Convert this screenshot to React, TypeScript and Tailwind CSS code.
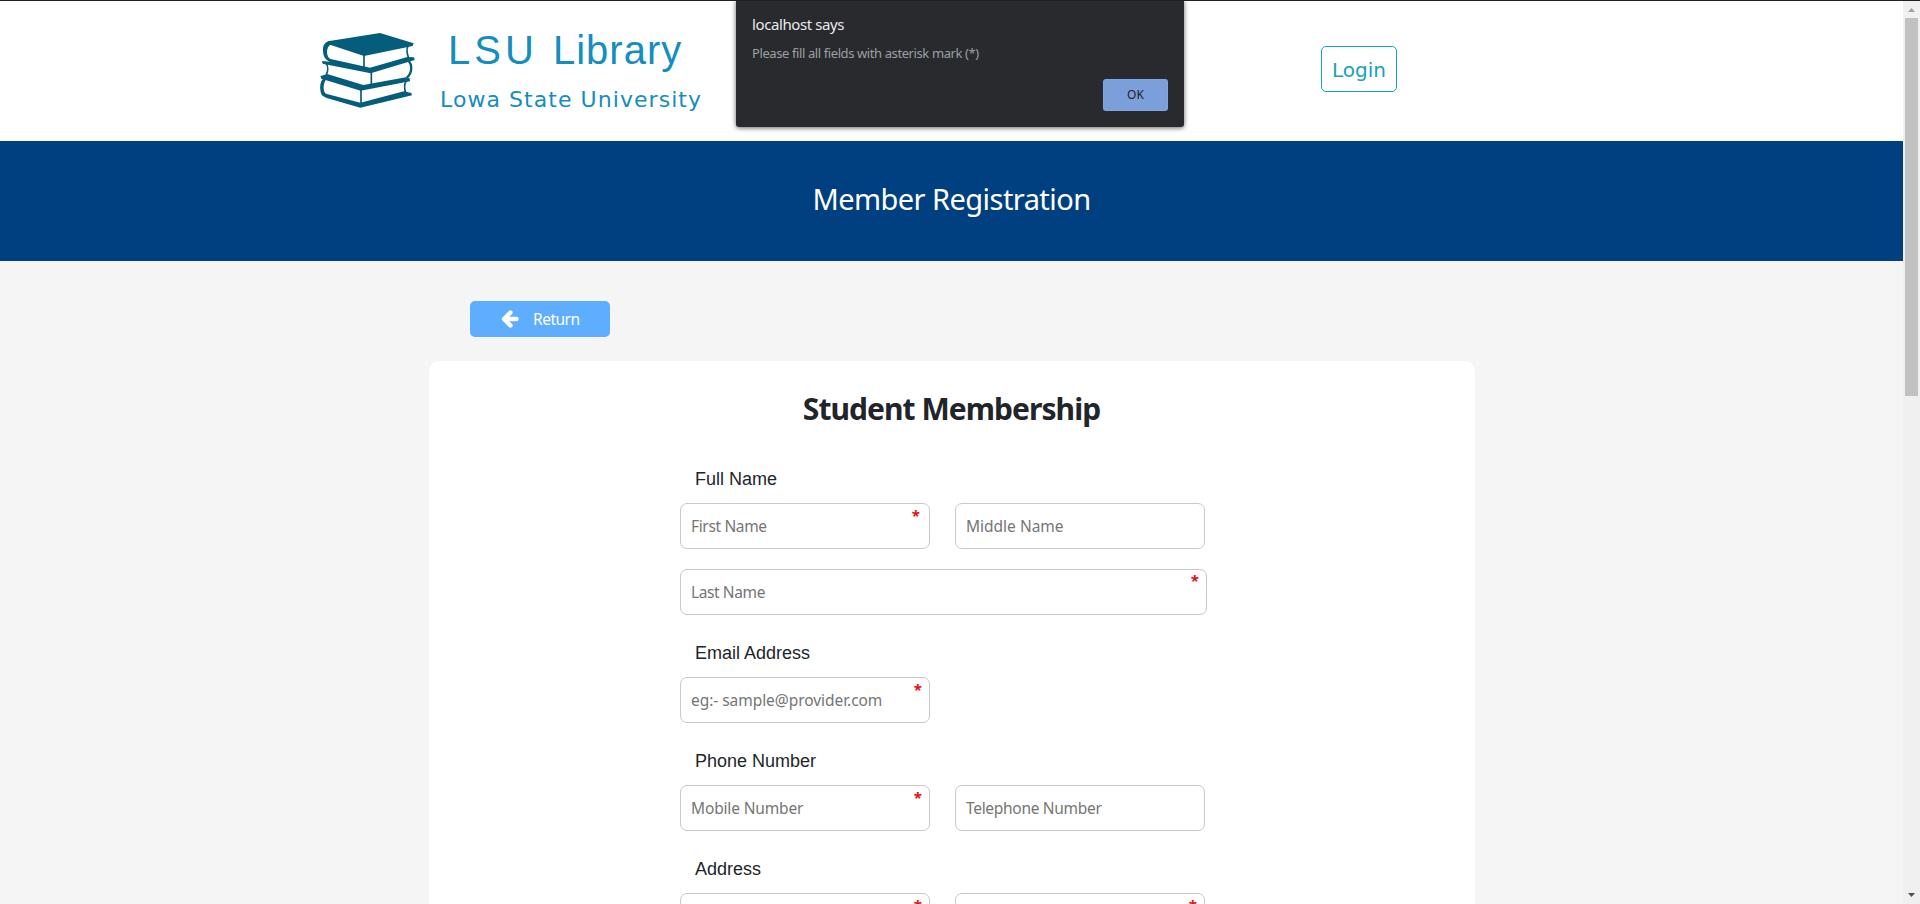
import React from "react";

type FieldProps = {
  placeholder: string;
  wide?: boolean;
  mark?: string;
  track?: string;
};

function Field({ placeholder, wide, mark, track = "" }: FieldProps) {
  return (
    <div className={`relative h-[46px] ${wide ? "w-[527px]" : "w-[250px]"}`}>
      <input
        type="text"
        placeholder={placeholder}
        className={`h-full w-full rounded-[7px] border border-[#c8c8c8] bg-white px-[10px] text-[15.5px] text-[#212529] placeholder:text-[#757575] ${track}`}
      />
      {mark && (
        <span className={`absolute text-[15px] leading-[22px] font-bold text-[#e80c14] ${mark}`}>*</span>
      )}
    </div>
  );
}

function Label({ children }: { children: React.ReactNode }) {
  return (
    <label className="mb-[10px] block pl-[15px] font-['Liberation_Sans',sans-serif] text-[18px] leading-[27px] text-[#212529]">
      {children}
    </label>
  );
}

function Books() {
  return (
    <svg viewBox="60 90 300 240" className="mt-[29px] h-[80px] w-[100px] shrink-0">
      <g fill="#045d7b">
        <path d="M84 124 L240 99 L341 130 L338 138 L320 142 L192 168 L90 134 Z" />
        <path d="M92 122 C72 124 68 140 69 153 C70 170 76 180 90 185 L66 183 L68 191 L212 220 L344 180 L342 172 L322 171 L210 203 L92 177 C77 170 78 140 92 134 Z" />
        <path d="M80 222 L61 229 L64 236 L182 272 L330 244 L329 235 L318 232 L190 255 L84 223 Z" />
        <path d="M72 234 C60 242 58 262 63 280 C64 287 72 291 80 294 L181 323 L336 286 L334 279 L312 274 L181 308 L78 281 C68 274 69 250 78 239 Z" />
      </g>
      <g fill="none" stroke="#045d7b" strokeWidth="5">
        <path d="M192 163 V202 M214 216 V257 M183 268 V312" />
        <path d="M324 138 C318 150 321 162 326 174" />
        <path d="M324 182 C337 192 338 220 320 233" strokeWidth="7" />
        <path d="M76 188 C86 198 84 214 79 224" />
        <path d="M318 244 C311 256 313 266 317 279" />
      </g>
    </svg>
  );
}

function Dialog() {
  return (
    <div className="absolute -top-px left-[736px] flex h-[127px] w-[448px] flex-col rounded-b-[3px] bg-[#292a2d] px-4 pt-[14px] shadow-[0_1px_5px_rgba(0,0,0,0.6)]">
      <p className="text-[15px] leading-[21px] tracking-[-0.4px] whitespace-nowrap text-[#e8eaed]">localhost says</p>
      <p className="mt-[8px] text-[13px] leading-[20px] tracking-[-0.4px] whitespace-nowrap text-[#9aa0a6]">
        Please fill all fields with asterisk mark (*)
      </p>
      <button className="mt-[16px] h-[32px] w-[65px] self-end rounded-[3px] border border-[#8ab0ee]/40 bg-[#7b9fdb] text-[12px] text-[#202124]">
        OK
      </button>
    </div>
  );
}

function Scrollbar() {
  return (
    <div className="flex h-full w-[17px] shrink-0 flex-col items-center bg-[#f0f0f0]">
      <svg viewBox="0 0 17 17" className="h-[17px] w-[17px]">
        <path d="M5 11 L8.5 7 L12 11 Z" fill="#a0a0a0" />
      </svg>
      <div className="h-[378px] w-[13px] bg-[#c1c1c1]" />
      <svg viewBox="0 0 17 17" className="mt-auto h-[17px] w-[17px]">
        <path d="M5 6 L12 6 L8.5 10 Z" fill="#505050" />
      </svg>
    </div>
  );
}

export default function App() {
  return (
    <div className="relative flex h-[904px] w-[1920px] overflow-hidden border-t border-[#202124] bg-[#f5f5f5] font-['Noto_Sans',sans-serif]">
      <div className="flex min-w-0 flex-1 flex-col overflow-hidden">
        <header className="flex h-[140px] shrink-0 items-start bg-white pl-[320px]">
          <Books />
          <div className="ml-[20px] w-[300px] text-[#148dbf]">
            <h1 className="mt-[26px] pl-[8px] font-['Liberation_Sans',sans-serif] text-[40px] leading-[46px] whitespace-nowrap">
              <span className="tracking-[4px]">LSU </span>
              <span className="tracking-[1px]">Library</span>
            </h1>
            <p className="mt-[12px] font-['DejaVu_Sans',sans-serif] text-[22px] leading-[30px] tracking-[1.05px] whitespace-nowrap">
              Lowa State University
            </p>
          </div>
          <button className="mt-[45px] ml-[581px] h-[46px] w-[76px] rounded-[5px] border border-[#17a2b8] pt-[2px] font-['DejaVu_Sans',sans-serif] text-[20px] text-[#17a2b8]">
            Login
          </button>
        </header>
        <div className="flex h-[120px] shrink-0 justify-center bg-[#004080] pt-[35px]">
          <h2 className="text-[29px] leading-[45px] tracking-[-0.55px] whitespace-nowrap text-white">Member Registration</h2>
        </div>
        <main className="flex shrink-0 flex-col pt-[40px] pl-[429px]">
          <button className="ml-[41px] flex h-[36px] w-[140px] items-center rounded-[5px] bg-[#5eadff] pl-[31px] text-[15.5px] text-white">
            <svg viewBox="0 0 18 18" className="h-[18px] w-[18px]">
              <path d="M9.5 2.5 L3 9 L9.5 15.5 M4 9 H15.5" fill="none" stroke="white" strokeWidth="4.4" strokeLinecap="round" strokeLinejoin="round" />
            </svg>
            <span className="ml-[14px] pt-[2px] tracking-[-0.5px]">Return</span>
          </button>
          <section className="mt-[24px] w-[1046px] rounded-t-[10px] bg-white pt-[24px] pl-[251px]">
            <h3 className="w-[543px] text-center text-[30px] leading-[48px] font-bold tracking-[-0.95px] whitespace-nowrap text-[#212529]">
              Student Membership
            </h3>
            <form className="mt-[33px] flex w-[527px] flex-col gap-[25px]">
              <div>
                <Label>Full Name</Label>
                <div className="flex flex-wrap gap-x-[25px] gap-y-[20px]">
                  <Field placeholder="First Name" mark="top-[1px] right-[10px]" track="tracking-[-0.35px]" />
                  <Field placeholder="Middle Name" />
                  <Field placeholder="Last Name" wide mark="top-0 right-[8px]" track="tracking-[-0.4px]" />
                </div>
              </div>
              <div>
                <Label>Email Address</Label>
                <Field placeholder="eg:- sample@provider.com" mark="top-[1px] right-[8px]" track="tracking-[-0.05px]" />
              </div>
              <div>
                <Label>Phone Number</Label>
                <div className="flex gap-[25px]">
                  <Field placeholder="Mobile Number" mark="top-[1px] right-[8px]" track="tracking-[-0.15px]" />
                  <Field placeholder="Telephone Number" track="tracking-[-0.3px]" />
                </div>
              </div>
              <div>
                <Label>Address</Label>
                <div className="flex gap-[25px]">
                  <Field placeholder="" mark="top-[1px] right-[8px]" />
                  <Field placeholder="" mark="top-[1px] right-[8px]" />
                </div>
              </div>
            </form>
          </section>
        </main>
      </div>
      <Scrollbar />
      <Dialog />
    </div>
  );
}
